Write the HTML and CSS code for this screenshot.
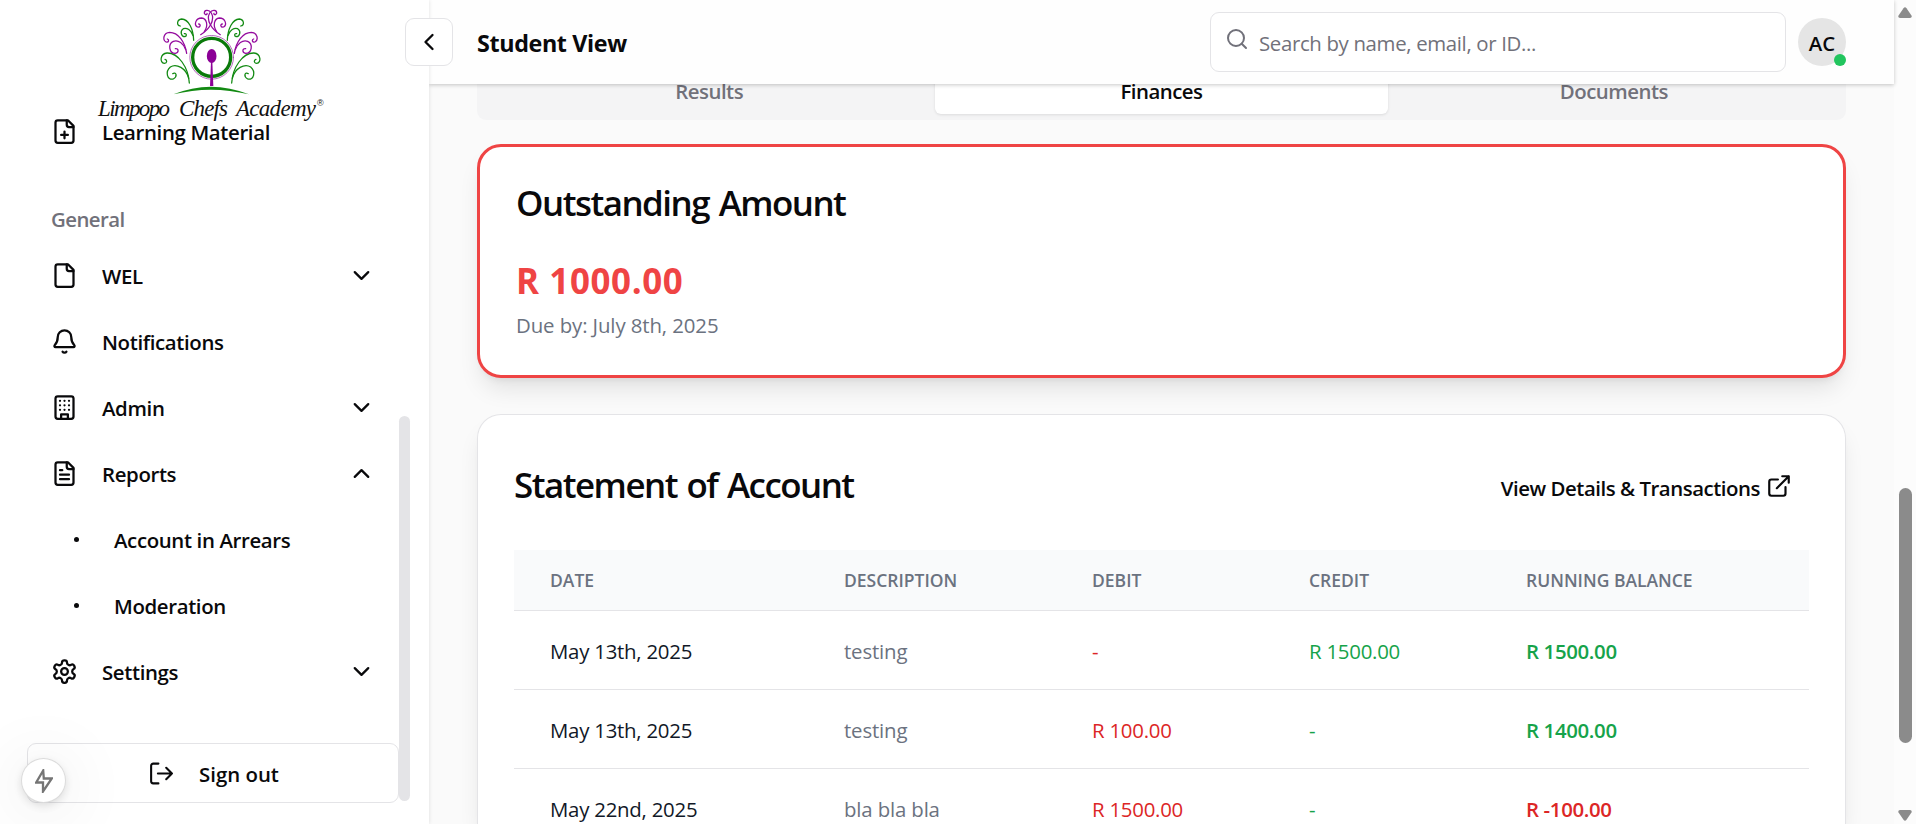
FILE: index.html
```html
<!DOCTYPE html>
<html lang="en">
<head>
<meta charset="utf-8">
<title>Student View</title>
<link rel="stylesheet" href="styles.css">
</head>
<body>
<svg width="0" height="0" class="defs">
  <defs>
    <symbol id="chevron" viewBox="0 0 24 24"><path d="m6 9 6 6 6-6"/></symbol>
    <symbol id="file" viewBox="0 0 24 24"><path d="M15 2H6a2 2 0 0 0-2 2v16a2 2 0 0 0 2 2h12a2 2 0 0 0 2-2V7Z"/><path d="M14 2v4a2 2 0 0 0 2 2h4"/></symbol>
    <g id="branch" fill="none" stroke-linecap="round">
      <g stroke="#128a12" stroke-width="3.8">
        <path d="M103 234C100 187 70 143 36 144C15 146 13 174 28 175C37 174 37 165 30 163"/>
        <path d="M101 220C94 190 64 174 46 186C30 200 36 227 55 222C69 214 63 199 53 206"/>
        <path d="M116 106C115 72 101 43 80 42C65 44 64 61 76 63"/>
        <path d="M114 92C109 75 95 67 85 71C74 78 78 95 90 95C97 93 94 84 88 86"/>
      </g>
      <g stroke="#940a9e" stroke-width="3.8">
        <path d="M95 145C90 111 70 82 44 82C25 83 22 105 33 111C42 113 43 104 37 102"/>
        <path d="M92 134C86 116 70 103 55 109C38 117 42 145 61 145C73 143 71 129 61 131"/>
        <path d="M137 89C163 73 181 45 169 24C161 12 147 15 148 25C151 32 158 29 156 25"/>
        <path d="M148 80C161 62 155 40 140 39C122 39 116 59 127 66C137 68 138 57 131 57"/>
      </g>
    </g>
  </defs>
</svg>

<div class="app">
  <aside class="sidebar">
    <div class="logo">
      <svg width="240" height="124" viewBox="90 0 240 124">
        <g transform="translate(155 5) scale(.33333)">
          <use href="#branch"/>
          <use href="#branch" transform="translate(333 0) scale(-1 1)"/>
          <circle cx="170" cy="157" r="65.5" fill="#fff" stroke="#a64cb0" stroke-width="2.5"/>
          <circle cx="170" cy="157" r="57" fill="none" stroke="#0a7a0a" stroke-width="10"/>
          <ellipse cx="170" cy="153" rx="14.5" ry="21" fill="#8b0096"/>
          <path d="M168 170h4l3 73h-10z" fill="#8b0096"/>
          <path d="M55 268Q167 222 282 268Q167 240 55 268Z" fill="#128a12"/>
        </g>
        <g class="logo-text">
          <text x="98" y="116" textLength="72">Limpopo</text>
          <text x="179" y="116" textLength="49">Chefs</text>
          <text x="236" y="116" textLength="80">Academy</text>
          <text x="317" y="106" class="logo-reg">®</text>
        </g>
      </svg>
    </div>
    <nav class="nav">
      <a class="item"><svg class="icon"><use href="#file"/><path d="M9 15h6M12 12v6" transform="scale(1.125)"/></svg><span>Learning Material</span></a>
      <p class="group">General</p>
      <a class="item"><svg class="icon"><use href="#file"/></svg><span>WEL</span><svg class="icon end"><use href="#chevron"/></svg></a>
      <a class="item"><svg class="icon" viewBox="0 0 24 24"><path d="M10.27 21a2 2 0 0 0 3.46 0"/><path d="M3.26 15.33A1 1 0 0 0 4 17h16a1 1 0 0 0 .74-1.67C19.41 13.96 18 12.5 18 8A6 6 0 0 0 6 8c0 4.5-1.41 5.96-2.74 7.33"/></svg><span>Notifications</span></a>
      <a class="item"><svg class="icon" viewBox="0 0 24 24"><rect x="4" y="2" width="16" height="20" rx="2"/><path d="M9 22v-4h6v4M8 6h.01M16 6h.01M12 6h.01M12 10h.01M12 14h.01M16 10h.01M16 14h.01M8 10h.01M8 14h.01"/></svg><span>Admin</span><svg class="icon end"><use href="#chevron"/></svg></a>
      <a class="item"><svg class="icon"><use href="#file"/><path d="M10 9H8M16 13H8M16 17H8" transform="scale(1.125)"/></svg><span>Reports</span><svg class="icon end flip"><use href="#chevron"/></svg></a>
      <a class="item sub"><i class="dot"></i><span>Account in Arrears</span></a>
      <a class="item sub"><i class="dot"></i><span>Moderation</span></a>
      <a class="item"><svg class="icon" viewBox="0 0 24 24"><path d="M12.22 2h-.44a2 2 0 0 0-2 2v.18a2 2 0 0 1-1 1.73l-.43.25a2 2 0 0 1-2 0l-.15-.08a2 2 0 0 0-2.73.73l-.22.38a2 2 0 0 0 .73 2.73l.15.1a2 2 0 0 1 1 1.72v.51a2 2 0 0 1-1 1.74l-.15.09a2 2 0 0 0-.73 2.73l.22.38a2 2 0 0 0 2.73.73l.15-.08a2 2 0 0 1 2 0l.43.25a2 2 0 0 1 1 1.73V20a2 2 0 0 0 2 2h.44a2 2 0 0 0 2-2v-.18a2 2 0 0 1 1-1.73l.43-.25a2 2 0 0 1 2 0l.15.08a2 2 0 0 0 2.73-.73l.22-.39a2 2 0 0 0-.73-2.73l-.15-.08a2 2 0 0 1-1-1.74v-.5a2 2 0 0 1 1-1.74l.15-.09a2 2 0 0 0 .73-2.73l-.22-.38a2 2 0 0 0-2.73-.73l-.15.08a2 2 0 0 1-2 0l-.43-.25a2 2 0 0 1-1-1.73V4a2 2 0 0 0-2-2z"/><circle cx="12" cy="12" r="3"/></svg><span>Settings</span><svg class="icon end"><use href="#chevron"/></svg></a>
    </nav>
    <button class="signout"><svg class="signout-icon" viewBox="0 0 24 24"><path d="M10 2.5H5a2 2 0 0 0-2 2v15a2 2 0 0 0 2 2h5M9.500 12H23M17.500 6.500 23 12l-5.500 5.500"/></svg><span>Sign out</span></button>
    <div class="side-thumb"></div>
    <button class="collapse"><svg class="icon" viewBox="0 0 24 24"><path d="m15 18-6-6 6-6"/></svg></button>
    <div class="bolt"><svg width="18" height="24" viewBox="0 0 18 24"><path d="M8.200 1.500 1.200 13.500h6.800V22.500L16.800 9.500H8.800Z"/></svg></div>
  </aside>

  <div class="main">
    <header class="header">
      <h1>Student View</h1>
      <div class="search"><svg viewBox="0 0 24 24"><circle cx="11" cy="11" r="8"/><path d="m21 21-4.300-4.300"/></svg><span>Search by name, email, or ID...</span></div>
      <div class="avatar">AC<i></i></div>
    </header>
    <main class="content">
      <div class="tabs"><div class="tab">Results</div><div class="tab active">Finances</div><div class="tab">Documents</div></div>
      <section class="card due">
        <h2>Outstanding Amount</h2>
        <p class="amount">R 1000.00</p>
        <p class="due-by">Due by: July 8th, 2025</p>
      </section>
      <section class="card statement">
        <div class="statement-head">
          <h2>Statement of Account</h2>
          <a class="details">View Details &amp; Transactions<svg viewBox="0 0 24 24"><path d="M15 3h6v6M10 14 21 3M18 13v6a2 2 0 0 1-2 2H5a2 2 0 0 1-2-2V8a2 2 0 0 1 2-2h6"/></svg></a>
        </div>
        <div class="table">
          <div class="row head"><span>DATE</span><span>DESCRIPTION</span><span>DEBIT</span><span>CREDIT</span><span>RUNNING BALANCE</span></div>
          <div class="row"><span>May 13th, 2025</span><span class="muted">testing</span><span class="red">-</span><span class="green">R 1500.00</span><span class="green strong">R 1500.00</span></div>
          <div class="row"><span>May 13th, 2025</span><span class="muted">testing</span><span class="red">R 100.00</span><span class="green">-</span><span class="green strong">R 1400.00</span></div>
          <div class="row last"><span>May 22nd, 2025</span><span class="muted">bla bla bla</span><span class="red">R 1500.00</span><span class="green">-</span><span class="red strong">R -100.00</span></div>
        </div>
      </section>
    </main>
  </div>

  <div class="scrollbar">
    <svg width="14" height="11" viewBox="0 0 14 11"><path d="M5.500 1.200Q7-.8 8.500 1.200L13.500 8.500Q14.300 10.800 12 11H2Q-.3 10.800.5 8.500Z"/></svg>
    <div class="thumb"></div>
    <svg class="down" width="14" height="11" viewBox="0 0 14 11"><path d="M5.500 1.200Q7-.8 8.500 1.200L13.500 8.500Q14.300 10.800 12 11H2Q-.3 10.800.5 8.500Z"/></svg>
  </div>
</div>
</body>
</html>
```
FILE: styles.css
```css
* { box-sizing: border-box; margin: 0; padding: 0; }
body {
  font-family: "Open Sans", "Noto Sans", sans-serif;
  font-size: 20.4px;
  line-height: 30px;
  color: #09090b;
  height: 824px;
  overflow: hidden;
}
h1, h2 { font-weight: 550; }
svg { fill: none; stroke: currentColor; stroke-width: 2; stroke-linecap: round; stroke-linejoin: round; flex: none; }
button { font: inherit; color: inherit; background: #fff; border: 1px solid #e4e4e7; }
.defs { position: absolute; }
.app { display: flex; height: 824px; background: #fafafa; }

/* Sidebar */
.sidebar {
  position: relative;
  z-index: 3;
  width: 429px;
  flex: none;
  padding: 99px 57px 0 27px;
  background: #fff;
  box-shadow: 0 0 4px rgba(0, 0, 0, .12);
}
.logo { position: absolute; left: 90px; top: 0; pointer-events: none; }
.logo svg { display: block; stroke: none; }
.logo-text { font: italic 23px "Liberation Serif", serif; fill: #111; }
.logo-reg { font: 9px "Liberation Sans", sans-serif; }
.nav { width: 345px; height: 644px; letter-spacing: -.36px; font-weight: 550; }
.item { display: flex; align-items: center; height: 66px; padding: 0 0 0 24px; }
.item span { padding-left: 24px; }
.icon { width: 27px; height: 27px; }
.item .icon { margin-bottom: 2px; }
.item .end { margin-left: auto; margin-right: -3px; }
.flip { transform: scaleY(-1); }
.group { height: 78px; padding: 39px 0 0 24px; color: #71717a; letter-spacing: -.55px; }
.sub { padding-left: 47px; }
.sub span { padding-left: 35px; }
.dot { width: 5px; height: 5px; margin-bottom: 2px; border-radius: 50%; background: currentColor; }
.signout {
  display: flex;
  align-items: center;
  gap: 26px;
  width: 372px;
  height: 60px;
  padding-left: 120px;
  border-radius: 9px;
  font-weight: 550;
}
.signout span { padding-top: 1px; }
.signout-icon { width: 25px; height: 25px; }
.side-thumb { position: absolute; left: 399px; top: 416px; width: 11px; height: 385px; border-radius: 6px; background: #e4e4e7; }
.collapse {
  position: absolute;
  left: 405px;
  top: 18px;
  display: flex;
  align-items: center;
  justify-content: center;
  width: 48px;
  height: 48px;
  border-radius: 9px;
}
.collapse .icon { width: 28px; height: 28px; }
.bolt {
  position: absolute;
  left: 22px;
  top: 759px;
  display: flex;
  align-items: center;
  justify-content: center;
  width: 43px;
  height: 43px;
  border-radius: 50%;
  background: #fff;
  color: #757575;
  box-shadow: 0 0 0 1px #dcdcdc, 0 3px 10px rgba(0, 0, 0, .14), 0 6px 70px rgba(0, 0, 0, .14);
}
.bolt svg { stroke-width: 2.3; stroke-linejoin: miter; }

/* Header */
.main { flex: 1; min-width: 0; display: flex; flex-direction: column; }
.header {
  position: relative;
  z-index: 2;
  display: flex;
  align-items: center;
  height: 84px;
  flex: none;
  padding: 0 48px;
  background: #fefefe;
  box-shadow: 0 1px 4px rgba(0, 0, 0, .22);
}
.header h1 { flex: 1; font-size: 23.3px; font-weight: 700; letter-spacing: -.37px; padding-top: 2px; }
.search {
  display: flex;
  align-items: center;
  gap: 10px;
  width: 576px;
  height: 60px;
  padding-left: 14px;
  border: 1px solid #e4e4e7;
  border-radius: 9px;
  background: #fff;
  color: #71717a;
  letter-spacing: -.34px;
}
.search svg { width: 24px; height: 24px; margin-top: -6px; }
.search span { padding-top: 2px; }
.avatar {
  position: relative;
  width: 48px;
  height: 48px;
  margin-left: 12px;
  border-radius: 50%;
  background: #e5e5e5;
  text-align: center;
  line-height: 50px;
  font-weight: 550;
}
.avatar i { position: absolute; right: 0; bottom: 0; width: 12px; height: 12px; border-radius: 50%; background: #22c55e; }

/* Content */
.content { padding: 0 48px; margin-top: -30px; height: 770px; overflow: hidden; }
.tabs { display: flex; height: 66px; padding: 6px; border-radius: 9px; background: #f4f4f5; color: #71717a; font-weight: 550; letter-spacing: -.5px; }
.tab { flex: 1; text-align: center; padding-top: 16px; border-radius: 6px; }
.active { background: #fff; color: #09090b; box-shadow: 0 1px 3px rgba(0, 0, 0, .1); }
.card {
  border: 1px solid #e4e4e7;
  border-radius: 24px;
  background: #fff;
  box-shadow: 0 15px 23px -5px rgba(0, 0, 0, .1), 0 6px 9px -6px rgba(0, 0, 0, .1);
}
.card h2 { font-size: 34.9px; line-height: 36px; letter-spacing: -1.5px; word-spacing: 2px; }
.due { height: 234px; margin-top: 24px; padding: 38px 36px; border: 3px solid #ef4444; }
.amount { margin-top: 33px; font-size: 34.9px; line-height: 54px; font-weight: 700; color: #ef4444; letter-spacing: .63px; }
.due-by { color: #6b7280; margin-top: 2px; letter-spacing: -.1px; }
.statement { height: 410px; margin-top: 36px; padding: 0 36px; border-bottom: 0; border-radius: 24px 24px 0 0; }
.statement-head { display: flex; justify-content: space-between; height: 135px; padding-right: 18px; }
.statement-head h2 { padding-top: 52px; }
.details { display: flex; gap: 6px; padding-top: 58px; font-weight: 550; letter-spacing: -.46px; }
.details svg { width: 26px; height: 26px; margin: 0 -1px 0 0; }
.row { display: grid; grid-template-columns: 294px 248px 217px 217px 1fr; height: 79px; padding: 25px 0 0 36px; border-bottom: 1px solid #e4e4e7; color: #111827; letter-spacing: -.24px; }
.head { height: 61px; padding-top: 15px; background: #f9fafb; color: #6b7280; font-size: 17.5px; font-weight: 550; letter-spacing: 0; }
.last { height: 55px; border: 0; }
.row .muted { color: #6b7280; letter-spacing: -.15px; }
.row .red { color: #dc2626; }
.row .green { color: #16a34a; }
.row .strong { font-weight: 600; letter-spacing: -.35px; }

/* Page scrollbar */
.scrollbar { width: 22px; flex: none; padding-top: 7px; display: flex; flex-direction: column; align-items: center; background: #fcfcfc; }
.scrollbar svg { fill: #8b8b8b; stroke: none; }
.thumb { width: 13px; height: 255px; margin: 470px 0 67px; border-radius: 7px; background: #8b8b8b; }
.down { transform: scaleY(-1); }
```
